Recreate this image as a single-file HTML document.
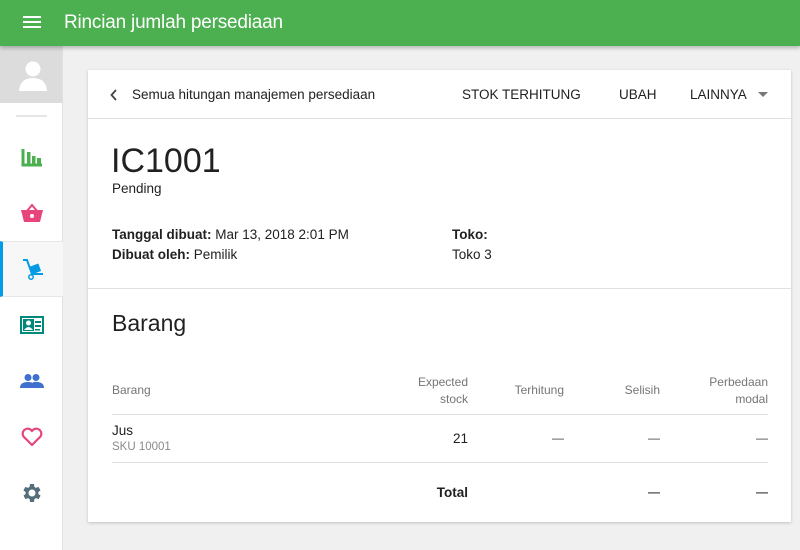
<!DOCTYPE html>
<html><head><style>
*{margin:0;padding:0;box-sizing:border-box}
body{width:800px;height:550px;overflow:hidden;background:#f0f0f0;font-family:"Liberation Sans",sans-serif;color:#212121;position:relative}
.top{position:absolute;left:0;top:0;width:800px;height:46px;background:#4caf50;box-shadow:0 2px 4px rgba(0,0,0,.25);z-index:3}
.top .t{position:absolute;left:64px;top:12px;color:#fff;font-size:19px;letter-spacing:-0.2px}
.ham{position:absolute;left:23px;top:16px;width:18px;height:2px;background:#fff;box-shadow:0 5px 0 #fff,0 10px 0 #fff}
.side{position:absolute;left:0;top:46px;width:63px;height:504px;background:#fff;border-right:1px solid #e0e0e0}
.av{height:57px;background:#dcdcdc;position:relative;overflow:hidden}
.div{position:absolute;left:16px;top:69px;width:31px;height:2px;background:#e6e6e6}
.ic{position:absolute;left:0;width:63px;height:56px;display:flex;align-items:center;justify-content:center}
.sel{background:#f7f7f7;border-left:3px solid #039be5;border-top:1px solid #e6e6e6;border-bottom:1px solid #e6e6e6}
.card{position:absolute;left:88px;top:70px;width:703px;height:452px;background:#fff;box-shadow:0 1px 3px rgba(0,0,0,.2)}
.hd{height:49px;border-bottom:1px solid #e0e0e0;position:relative;font-size:13.5px}
.hd span{position:absolute;top:17px}
.b{font-weight:bold}
table{border-collapse:collapse;position:absolute;left:24px;top:298px;width:656px;font-size:13px}
td{padding:0}
.r{text-align:right}
.g{color:#757575;font-size:11.5px}
.d{color:#444;font-size:12px}
</style></head><body>
<div class="top"><div class="ham"></div><div class="t">Rincian jumlah persediaan</div></div>
<div class="side">
 <div class="av"><svg width="63" height="57"><circle cx="33" cy="23" r="7.5" fill="#fff"/><path d="M19 45 Q20 32 33 32 Q46 32 47 45Z" fill="#fff"/></svg></div>
 <div class="div"></div>
 <div class="ic" style="top:83px"><svg width="22" height="20"><path d="M2 2v16h19" stroke="#4caf50" stroke-width="3" fill="none"/><rect x="6" y="5" width="3.5" height="12" fill="#4caf50"/><rect x="11" y="9" width="3.5" height="8" fill="#4caf50"/><rect x="16" y="11" width="4" height="6" fill="#4caf50"/></svg></div>
 <div class="ic" style="top:139px"><svg width="24" height="20"><path d="M7 8 L12 2 L17 8" stroke="#e8457a" stroke-width="2" fill="none"/><path d="M1 7h22l-3 12H4z" fill="#e8457a"/><circle cx="12" cy="13" r="2" fill="#fff"/></svg></div>
 <div class="ic sel" style="top:195px"><svg width="24" height="24"><path d="M2 3h4l5 14h11" stroke="#039be5" stroke-width="2" fill="none"/><rect x="10" y="8" width="9" height="8" fill="#039be5" transform="rotate(-20 14 12)"/><circle cx="10" cy="20" r="2.2" fill="none" stroke="#039be5" stroke-width="1.5"/></svg></div>
 <div class="ic" style="top:251px"><svg width="24" height="18"><rect width="24" height="18" fill="#00897b"/><rect x="2" y="2" width="20" height="14" fill="#fff"/><rect x="3" y="3" width="11" height="12" fill="#00897b"/><circle cx="8.5" cy="7" r="2.5" fill="#fff"/><path d="M4 14q4.5-6 9 0z" fill="#fff"/><rect x="15" y="5" width="6" height="2" fill="#00897b"/><rect x="15" y="9" width="6" height="2" fill="#00897b"/><rect x="15" y="13" width="5" height="1.5" fill="#00897b"/></svg></div>
 <div class="ic" style="top:307px"><svg width="24" height="14"><circle cx="8" cy="3.5" r="3.5" fill="#3f6fcf"/><circle cx="16" cy="3.5" r="3.5" fill="#3f6fcf"/><path d="M0 14q0-6 8-6t8 6z M13 8q11-1 11 6h-9z" fill="#3f6fcf"/></svg></div>
 <div class="ic" style="top:363px"><svg width="22" height="20"><path d="M11 18 L2.5 9.5 A5 5 0 0 1 11 4 A5 5 0 0 1 19.5 9.5Z" stroke="#e8457a" stroke-width="2.2" fill="none" stroke-linejoin="round"/></svg></div>
 <div class="ic" style="top:419px"><svg width="24" height="24" viewBox="0 0 24 24"><path fill="#546e7a" d="M19.4 13a7.5 7.5 0 0 0 0-2l2.1-1.6-2-3.5-2.5 1a7 7 0 0 0-1.7-1L15 3h-4l-.4 2.9a7 7 0 0 0-1.7 1l-2.5-1-2 3.5L6.6 11a7.5 7.5 0 0 0 0 2l-2.1 1.6 2 3.5 2.5-1a7 7 0 0 0 1.7 1L11 21h4l.4-2.9a7 7 0 0 0 1.7-1l2.5 1 2-3.5zM13 15.5a3.5 3.5 0 1 1 0-7 3.5 3.5 0 0 1 0 7z" transform="translate(-1 0)"/></svg></div>
</div>
<div class="card">
 <div class="hd">
  <svg style="position:absolute;left:22px;top:19px" width="8" height="12"><path d="M6 1L1.5 6 6 11" stroke="#444" stroke-width="1.8" fill="none"/></svg>
  <span style="left:44px">Semua hitungan manajemen persediaan</span>
  <span style="left:374px">STOK TERHITUNG</span>
  <span style="left:531px">UBAH</span>
  <span style="left:602px">LAINNYA</span>
  <svg style="position:absolute;left:670px;top:22px" width="10" height="6"><path d="M0 0h10L5 5z" fill="#777"/></svg>
 </div>
 <div style="position:absolute;left:23px;top:72px;font-size:34px">IC1001</div>
 <div style="position:absolute;left:24px;top:111px;font-size:13.5px">Pending</div>
 <div style="position:absolute;left:24px;top:155px;font-size:13.5px;line-height:20px"><span class="b">Tanggal dibuat:</span> Mar 13, 2018 2:01 PM<br><span class="b">Dibuat oleh:</span> Pemilik</div>
 <div style="position:absolute;left:364px;top:155px;font-size:13.5px;line-height:20px"><span class="b">Toko:</span><br>Toko 3</div>
 <div style="position:absolute;left:0;top:218px;width:703px;height:1px;background:#e0e0e0"></div>
 <div style="position:absolute;left:24px;top:240px;font-size:23px">Barang</div>
 <table>
  <tr style="height:46px;border-bottom:1px solid #e0e0e0;color:#757575;font-size:12px;line-height:17px">
   <td>Barang</td><td class="r" style="width:130px">Expected<br>stock</td><td class="r" style="width:96px">Terhitung</td><td class="r" style="width:96px">Selisih</td><td class="r" style="width:108px">Perbedaan<br>modal</td></tr>
  <tr style="height:48px;border-bottom:1px solid #e0e0e0"><td style="font-size:13.5px">Jus<br><span class="g" style="color:#8a8a8a">SKU 10001</span></td><td class="r" style="font-size:13.5px">21</td><td class="r d">—</td><td class="r d">—</td><td class="r d">—</td></tr>
  <tr style="height:60px"><td></td><td class="r b" style="font-size:13.5px">Total</td><td></td><td class="r b d">—</td><td class="r b d">—</td></tr>
 </table>
</div>
</body></html>
